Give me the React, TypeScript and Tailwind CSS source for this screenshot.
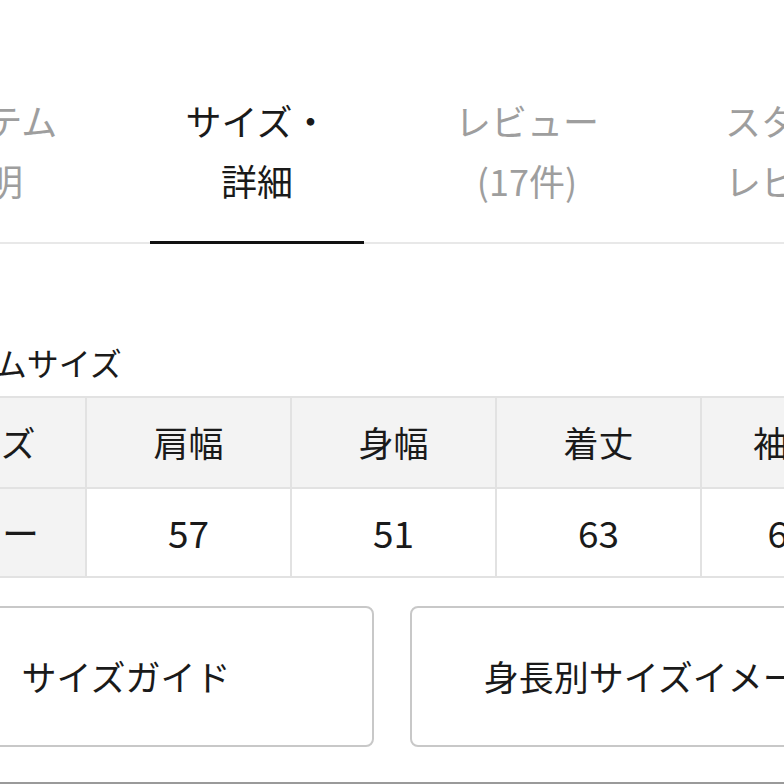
import React from "react";

const tabs = [
  { l1: "アイテム", l2: "説明", active: false },
  { l1: "サイズ・", l2: "詳細", active: true },
  { l1: "レビュー", l2: "(17件)", active: false },
  { l1: "スタッフ", l2: "レビュー", active: false },
];

const headers = ["サイズ", "肩幅", "身幅", "着丈", "袖丈"];
const values = ["フリー", "57", "51", "63", "60"];

export default function App() {
  return (
    <div
      className="w-[784px] h-[784px] overflow-hidden bg-white flex flex-col"
      style={{ fontFamily: '"Noto Sans CJK JP", "Noto Sans", sans-serif' }}
    >
      {/* Tabs */}
      <div className="pt-[90px] border-b-2 border-[#e8e8e8] shrink-0">
        <div className="flex gap-[56px] ml-[-120px] w-max">
          {tabs.map((t, i) => (
            <div
              key={i}
              className={`w-[214px] shrink-0 text-center text-[36px] leading-[60px] pb-[31px] mb-[-2px] ${
                t.active
                  ? "text-[#1a1a1a] border-b-[3px] border-[#111]"
                  : "text-[#9e9e9e] border-b-[3px] border-transparent"
              }`}
            >
              <div>{t.l1}</div>
              <div>{t.l2}</div>
            </div>
          ))}
        </div>
      </div>

      {/* Content */}
      <div className="ml-[-120px] w-max shrink-0">
        <div className="pt-[98px] text-[32px] leading-[40px] text-[#1a1a1a] ml-[22px]">
          アイテムサイズ
        </div>
        <div className="mt-[14px] grid grid-cols-[205px_205px_205px_205px_174px] border-t-2 border-l-2 border-[#e2e2e2]">
          {headers.map((h, i) => (
            <div
              key={"h" + i}
              className="h-[91px] flex items-center justify-center bg-[#f3f3f3] border-r-2 border-b-2 border-[#e2e2e2] text-[35px] text-[#1a1a1a]"
            >
              {h}
            </div>
          ))}
          {values.map((v, i) => (
            <div
              key={"v" + i}
              className={`h-[89px] flex items-center justify-center border-r-2 border-b-2 border-[#e2e2e2] text-[37px] text-[#1a1a1a] ${
                i === 0 ? "bg-[#f3f3f3] text-[35px]" : "bg-white"
              }`}
            >
              {v}
            </div>
          ))}
        </div>
        <div className="mt-[28px] flex gap-[36px] ml-[-2px]">
          <div className="w-[496px] h-[141px] rounded-[8px] border-2 border-[#c8c8c8] flex items-center justify-center text-[35px] text-[#1a1a1a]">
            サイズガイド
          </div>
          <div className="w-[496px] h-[141px] rounded-[8px] border-2 border-[#c8c8c8] flex items-center justify-center text-[35px] text-[#1a1a1a]">
            身長別サイズイメージ
          </div>
        </div>
      </div>
      <div className="mt-auto h-[2px] bg-[#9a9a9a] shrink-0" />
    </div>
  );
}
